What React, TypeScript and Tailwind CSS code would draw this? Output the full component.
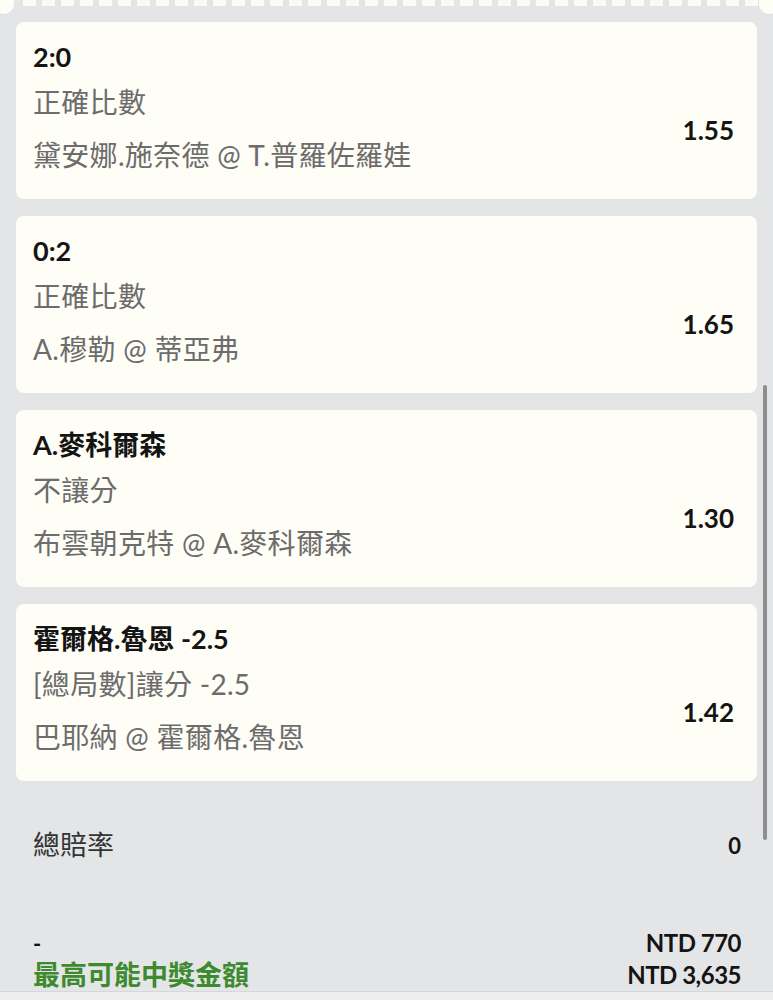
import React from "react";

const FONT = "font-['Lato','Noto_Sans_CJK_TC',sans-serif]";

const bets = [
  { title: "2:0", market: "正確比數", match: "黛安娜.施奈德 @ T.普羅佐羅娃", odds: "1.55" },
  { title: "0:2", market: "正確比數", match: "A.穆勒 @ 蒂亞弗", odds: "1.65" },
  { title: "A.麥科爾森", market: "不讓分", match: "布雲朝克特 @ A.麥科爾森", odds: "1.30" },
  { title: "霍爾格.魯恩 -2.5", market: "[總局數]讓分 -2.5", match: "巴耶納 @ 霍爾格.魯恩", odds: "1.42" },
];

function BetCard({ title, market, match, odds }: (typeof bets)[number]) {
  return (
    <div className="h-[177px] rounded-lg bg-[#fefdf6] pl-[17px] pr-[23px] pt-[15px]">
      <div className="text-[27px] leading-[40px] font-bold text-[#141414]">{title}</div>
      <div className="flex items-center">
        <div className="flex-1 text-[28px] text-[#6c6c6c] tracking-[0.3px]">
          <div className="leading-[50px]">{market}</div>
          <div className="leading-[56px]">{match}</div>
        </div>
        <div className="text-[26px] font-bold text-[#141414]">{odds}</div>
      </div>
    </div>
  );
}

export default function App() {
  return (
    <div className={`relative w-[773px] h-[1000px] overflow-hidden bg-[#e4e5e7] ${FONT}`}>
      {/* ticket edge */}
      <div className="relative h-[7px]">
        <div className="absolute -left-[6px] -top-[8px] w-[20px] h-[22px] rounded-full bg-[#fefdf6]" />
        <div className="absolute -right-[6px] -top-[8px] w-[20px] h-[22px] rounded-full bg-[#fefdf6]" />
        <div className="flex gap-[6px] pl-[23px] h-[6px] overflow-hidden pr-[18px]">
          {Array.from({ length: 39 }).map((_, i) => (
            <div key={i} className="w-[13px] h-[6px] shrink-0 bg-[#fbfbf6]" />
          ))}
        </div>
      </div>

      <div className="flex flex-col gap-[17px] px-4 pt-[15px]">
        {bets.map((b) => (
          <BetCard key={b.title} {...b} />
        ))}
      </div>

      <div className="flex items-center justify-between pl-[33px] pr-[32px] mt-[44px] h-[40px]">
        <span className="text-[27px] text-[#333]">總賠率</span>
        <span className="text-[22px] font-bold text-[#141414]">0</span>
      </div>

      <div className="pl-[33px] pr-[32px] mt-[62px]">
        <div className="flex items-center justify-between h-[32px]">
          <span className="text-[22px] font-bold text-[#141414]">-</span>
          <span className="text-[24px] font-bold text-[#141414] tracking-[-0.5px]">NTD 770</span>
        </div>
        <div className="flex items-center justify-between h-[32px]">
          <span className="text-[27px] font-bold text-[#3d8a2f]">最高可能中獎金額</span>
          <span className="text-[24px] font-bold text-[#141414] tracking-[-0.5px]">NTD 3,635</span>
        </div>
      </div>

      <div className="absolute left-0 right-0 bottom-0 h-[9px] bg-[#eeeeef] border-t border-[#d6d7d9]" />

      {/* scrollbar */}
      <div className="absolute right-[6px] top-[385px] w-[4px] h-[455px] rounded-full bg-[#8e8e8e]" />
    </div>
  );
}
